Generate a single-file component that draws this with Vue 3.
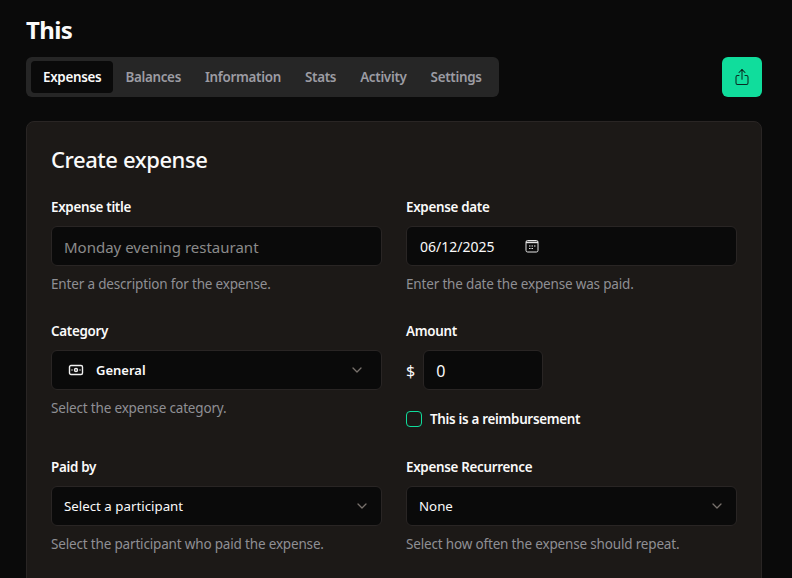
<template>
  <div class="page">
    <h1 class="group-title">This</h1>
    <div class="toolbar">
      <nav class="tabs">
        <button
          v-for="tab in tabs"
          :key="tab"
          class="tab"
          :class="{ 'tab--active': tab === 'Expenses' }"
        >
          {{ tab }}
        </button>
      </nav>
      <button class="share" aria-label="Share">
        <svg viewBox="0 0 24 24" class="share-icon">
          <path d="M12 15V2" />
          <path d="M8 6l4-4 4 4" />
          <path d="M8 10H6a2 2 0 0 0-2 2v8a2 2 0 0 0 2 2h12a2 2 0 0 0 2-2v-8a2 2 0 0 0-2-2h-2" />
        </svg>
      </button>
    </div>

    <section class="card">
      <h2 class="card-title">Create expense</h2>
      <div class="form-grid">
        <div class="field">
          <label class="label">Expense title</label>
          <input class="input input--title" placeholder="Monday evening restaurant" />
          <p class="hint">Enter a description for the expense.</p>
        </div>

        <div class="field">
          <label class="label">Expense date</label>
          <div class="input date-box">
            <span class="date-value">06/12/2025</span>
            <svg viewBox="0 0 14 14" class="calendar">
              <rect x="1" y="1.5" width="12" height="11.5" rx="1.6" />
              <path class="calendar-band" d="M1 3.4h12" />
              <path class="calendar-dots" d="M4 7h1.5M6.5 7H8M9 7h1.5M4 9.5h1.5M6.5 9.5H8" />
            </svg>
          </div>
          <p class="hint">Enter the date the expense was paid.</p>
        </div>

        <div class="field">
          <label class="label">Category</label>
          <div class="input select">
            <svg viewBox="0 0 16 12" class="banknote">
              <rect x="1.5" y="1.5" width="13" height="9" rx="1.5" />
              <circle cx="8" cy="6" r="1.5" />
              <path d="M4 6h.01M12 6h.01" />
            </svg>
            <span class="select-strong">General</span>
            <svg viewBox="0 0 16 16" class="chevron chevron--inset"><path d="M4 6l4 4 4-4" /></svg>
          </div>
          <p class="hint">Select the expense category.</p>
        </div>

        <div class="field">
          <label class="label">Amount</label>
          <div class="amount-row">
            <span class="currency">$</span>
            <input class="input input--amount" value="0" />
          </div>
          <label class="check-row">
            <span class="checkbox" />
            <span class="check-label">This is a reimbursement</span>
          </label>
        </div>

        <div class="field">
          <label class="label">Paid by</label>
          <div class="input select">
            <span class="select-text">Select a participant</span>
            <svg viewBox="0 0 16 16" class="chevron"><path d="M4 6l4 4 4-4" /></svg>
          </div>
          <p class="hint">Select the participant who paid the expense.</p>
        </div>

        <div class="field">
          <label class="label">Expense Recurrence</label>
          <div class="input select">
            <span class="select-text">None</span>
            <svg viewBox="0 0 16 16" class="chevron"><path d="M4 6l4 4 4-4" /></svg>
          </div>
          <p class="hint">Select how often the expense should repeat.</p>
        </div>
      </div>
    </section>
  </div>
</template>

<script setup>
const tabs = ['Expenses', 'Balances', 'Information', 'Stats', 'Activity', 'Settings']
</script>

<style>
html,
body {
  margin: 0;
  background: #0a0a0a;
  overflow: hidden;
}
</style>

<style scoped>
.page {
  height: 578px;
  overflow: hidden;
  padding: 16px 30px 0 26px;
  box-sizing: border-box;
  background: #0a0a0a;
  color: #fafafa;
  font-family: "Noto Sans", "Open Sans", sans-serif;
}

.group-title {
  margin: 0 0 11px;
  font-size: 24px;
  line-height: 28px;
  padding-bottom: 2px;
  font-weight: 700;
  letter-spacing: -0.6px;
}

.toolbar {
  display: flex;
  justify-content: space-between;
  align-items: center;
}

.tabs {
  display: flex;
  height: 40px;
  padding: 4px 5px;
  box-sizing: border-box;
  background: #262626;
  border-radius: 6px;
}

.tab {
  padding: 0 12px;
  border: 0;
  border-radius: 4px;
  background: none;
  color: #9c9ca3;
  font: 600 13.4px/32px "Noto Sans", sans-serif;
  letter-spacing: -0.3px;
}

.tab--active {
  background: #0a0a0a;
  color: #fafafa;
}

.share {
  display: flex;
  align-items: center;
  justify-content: center;
  width: 40px;
  height: 40px;
  padding: 0;
  border: 0;
  border-radius: 6px;
  background: #10dd9c;
}

.share-icon {
  width: 18px;
  height: 18px;
  fill: none;
  stroke: #0a2a22;
  stroke-width: 1.4;
  stroke-linecap: round;
  stroke-linejoin: round;
}

.card {
  margin-top: 24px;
  padding: 24px 24px 60px;
  background: #1c1917;
  border: 1px solid #292524;
  border-radius: 8px;
}

.card-title {
  margin: 0 0 24px;
  font-size: 22px;
  line-height: 27px;
  font-weight: 500;
  letter-spacing: -0.42px;
}

.form-grid {
  display: grid;
  grid-template-columns: 1fr 1fr;
  column-gap: 24px;
  row-gap: 27px;
}

.field {
  display: flex;
  flex-direction: column;
}

.label {
  font-size: 13.4px;
  line-height: 20px;
  font-weight: 600;
  letter-spacing: -0.3px;
  margin-bottom: 9px;
}

.input {
  display: flex;
  align-items: center;
  width: 100%;
  height: 40px;
  padding: 0 12px;
  box-sizing: border-box;
  background: #0a0a0a;
  border: 1px solid #292524;
  border-radius: 6px;
  color: #fafafa;
  font-family: inherit;
  font-size: 14px;
  outline: none;
}

.input--title {
  font-size: 15px;
  padding-top: 2px;
}

.input--title::placeholder {
  color: #8b8b8b;
  opacity: 1;
}

.date-value {
  margin-left: 1px;
  width: 104.5px;
}

.calendar {
  width: 14px;
  height: 14px;
  fill: none;
  stroke: #e5e5e5;
  stroke-width: 1;
}

.calendar-band {
  stroke-width: 1.6;
}

.calendar-dots {
  stroke-width: 1.2;
}

.banknote {
  width: 16px;
  height: 12px;
  margin: 0 12px 0 4px;
  fill: none;
  stroke: #f0f0f0;
  stroke-width: 1.4;
  stroke-linecap: round;
}

.select {
  justify-content: flex-start;
}

.select-strong {
  font-weight: 600;
  font-size: 13px;
}

.select-text {
  font-size: 13.3px;
  padding-bottom: 1px;
}

.chevron {
  width: 16px;
  height: 16px;
  margin-left: auto;
  margin-right: -1px;
  fill: none;
  stroke: #78716c;
  stroke-width: 1.3;
  stroke-linecap: round;
  stroke-linejoin: round;
}

.chevron--inset {
  margin-right: 4px;
}

.hint {
  margin: 8px 0 0;
  font-size: 13.5px;
  line-height: 20px;
  color: #8f8f94;
  letter-spacing: -0.17px;
}

.amount-row {
  display: flex;
  align-items: center;
  gap: 8px;
}

.currency {
  font-size: 16px;
  padding-top: 2px;
}

.input--amount {
  width: 120px;
  font-size: 16px;
  padding-top: 2px;
}

.check-row {
  display: flex;
  align-items: center;
  gap: 8px;
  margin-top: 19px;
  margin-bottom: 1px;
  height: 20px;
}

.checkbox {
  width: 16px;
  height: 16px;
  box-sizing: border-box;
  border: 1px solid #10dd9c;
  border-radius: 4px;
}

.check-label {
  font-size: 13.4px;
  font-weight: 600;
  letter-spacing: -0.3px;
}
</style>
